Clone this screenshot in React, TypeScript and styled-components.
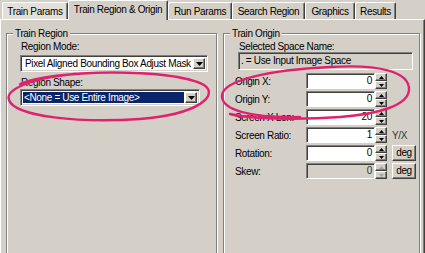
import React from "react";
import styled, { createGlobalStyle } from "styled-components";

const GlobalStyle = createGlobalStyle`
  html, body { margin: 0; padding: 0; background: #d4d0c8; }
  body {
    font-family: "Liberation Sans", Arial, sans-serif;
    font-size: 10px;
    letter-spacing: -0.35px;
    color: #000;
  }
  * { box-sizing: border-box; }
`;

const Root = styled.div`
  position: relative;
  width: 425px;
  height: 253px;
  overflow: hidden;
  background: #d4d0c8;
`;

const TabStrip = styled.div`
  display: flex;
  align-items: flex-end;
  height: 19px;
  padding-left: 2px;
  position: relative;
  z-index: 1;
`;

const Tab = styled.div<{ $active?: boolean; $width: number; $hot?: boolean }>`
  width: ${(p) => p.$width}px;
  height: ${(p) => (p.$active ? 20 : 17)}px;
  margin-bottom: ${(p) => (p.$active ? -1 : 0)}px;
  background: ${(p) => (p.$hot ? "#e3e0d9" : "#d4d0c8")};
  border-top: 1px solid #fff;
  border-left: 1px solid #fff;
  border-right: 1px solid #404040;
  box-shadow: inset -1px 0 0 #808080;
  border-radius: 2px 2px 0 0;
  display: flex;
  align-items: center;
  justify-content: center;
  line-height: 13px;
  white-space: nowrap;
  padding-bottom: ${(p) => (p.$active ? 2 : 0)}px;
`;

const Panel = styled.div`
  width: 425px;
  height: 250px;
  border-top: 1px solid #fff;
  border-left: 1px solid #fff;
  border-right: 1px solid #404040;
  box-shadow: inset -1px 0 0 #808080;
  display: flex;
  align-items: flex-start;
  gap: 6px;
  padding: 7px 0 0 5px;
`;

const Group = styled.fieldset<{ $width: number }>`
  width: ${(p) => p.$width}px;
  height: 260px;
  margin: 0;
  padding: 0;
  min-width: 0;
  border: 1px solid #808080;
  box-shadow: inset 1px 1px 0 #fff, 1px 1px 0 #fff;
`;

const Legend = styled.legend`
  margin-left: 6px;
  padding: 0 2px;
  line-height: 13px;
  background: #d4d0c8;
`;

const GroupBody = styled.div<{ $pl: number }>`
  display: flex;
  flex-direction: column;
  align-items: flex-start;
  padding-left: ${(p) => p.$pl}px;
`;

const Label = styled.div<{ $mt?: number; $ml?: number }>`
  line-height: 13px;
  margin-top: ${(p) => p.$mt ?? 0}px;
  margin-left: ${(p) => p.$ml ?? 0}px;
  white-space: nowrap;
`;

const Combo = styled.div<{ $width: number; $mt?: number }>`
  width: ${(p) => p.$width}px;
  height: 17px;
  margin-top: ${(p) => p.$mt ?? 0}px;
  border: 1px solid;
  border-color: #808080 #fff #fff #808080;
  box-shadow: inset 1px 1px 0 #404040, inset -1px -1px 0 #d4d0c8;
  background: #fff;
  display: flex;
  align-items: stretch;
  padding: 2px;
`;

const ComboText = styled.div<{ $selected?: boolean }>`
  flex: 1;
  line-height: 11px;
  padding-left: ${(p) => (p.$selected ? 1 : 2)}px;
  margin-right: 1px;
  white-space: nowrap;
  overflow: hidden;
  background: ${(p) => (p.$selected ? "#0a246a" : "transparent")};
  color: ${(p) => (p.$selected ? "#fff" : "#000")};
`;

const DropButton = styled.div`
  width: 12px;
  background: #d4d0c8;
  border: 1px solid;
  border-color: #fff #404040 #404040 #fff;
  box-shadow: inset -1px -1px 0 #808080;
  display: flex;
  align-items: center;
  justify-content: center;
`;

const ReadOnlyBox = styled.div`
  width: 175px;
  height: 18px;
  margin-top: -1px;
  margin-left: 3px;
  border: 1px solid;
  border-color: #808080 #fff #fff #808080;
  box-shadow: inset 1px 1px 0 #404040;
  background: #d4d0c8;
  line-height: 15px;
  padding-left: 2px;
  white-space: nowrap;
  overflow: hidden;
`;

const Rows = styled.div`
  display: flex;
  flex-direction: column;
  gap: 2px;
  margin-top: 3px;
`;

const Row = styled.div`
  display: flex;
  align-items: center;
  height: 16px;
`;

const RowLabel = styled.div`
  width: 71px;
  line-height: 13px;
  white-space: nowrap;
`;

const Edit = styled.div<{ $disabled?: boolean }>`
  width: 69px;
  height: 16px;
  border: 1px solid;
  border-color: #808080 #fff #fff #808080;
  box-shadow: inset 1px 1px 0 #404040;
  background: ${(p) => (p.$disabled ? "#d4d0c8" : "#fff")};
  color: ${(p) => (p.$disabled ? "#333" : "#000")};
  text-align: right;
  padding-right: 2px;
  line-height: 14px;
`;

const Spin = styled.div`
  display: flex;
  flex-direction: column;
  width: 12px;
  height: 16px;
`;

const SpinBtn = styled.div`
  flex: 1;
  background: #d4d0c8;
  border: 1px solid;
  border-color: #fff #404040 #404040 #fff;
  box-shadow: inset -1px -1px 0 #808080;
  display: flex;
  align-items: center;
  justify-content: center;
`;

const Extra = styled.div`
  margin-left: 5px;
  line-height: 13px;
  color: #333;
`;

const Button = styled.div`
  margin-left: 5px;
  width: 24px;
  height: 16px;
  background: #d4d0c8;
  border: 1px solid;
  border-color: #fff #404040 #404040 #fff;
  box-shadow: inset -1px -1px 0 #808080;
  display: flex;
  align-items: center;
  justify-content: center;
  line-height: 12px;
`;

const Overlay = styled.svg`
  position: absolute;
  left: 0;
  top: 0;
  width: 425px;
  height: 253px;
  pointer-events: none;
  z-index: 5;
`;

const Arrow = ({ up, color = "#000" }: { up?: boolean; color?: string }) => (
  <svg width="5" height="3" viewBox="0 0 5 3" style={{ display: "block" }}>
    <path d={up ? "M2.5 0 L5 3 L0 3 Z" : "M0 0 L5 0 L2.5 3 Z"} fill={color} />
  </svg>
);

const DropArrow = () => (
  <svg width="7" height="4" viewBox="0 0 7 4" style={{ display: "block" }}>
    <path d="M0 0 L7 0 L3.5 4 Z" fill="#000" />
  </svg>
);

const tabs = [
  { label: "Train Params", width: 66, hot: true },
  { label: "Train Region & Origin", width: 100, active: true },
  { label: "Run Params", width: 64 },
  { label: "Search Region", width: 73 },
  { label: "Graphics", width: 50 },
  { label: "Results", width: 41 },
];

type Field = {
  label: string;
  value: string;
  disabled?: boolean;
  extra?: "text" | "button";
  extraText?: string;
};

const fields: Field[] = [
  { label: "Origin X:", value: "0" },
  { label: "Origin Y:", value: "0" },
  { label: "Screen X Len:", value: "20" },
  { label: "Screen Ratio:", value: "1", extra: "text", extraText: "Y/X" },
  { label: "Rotation:", value: "0", extra: "button", extraText: "deg" },
  { label: "Skew:", value: "0", disabled: true, extra: "button", extraText: "deg" },
];

export default function App() {
  return (
    <Root>
      <GlobalStyle />
      <TabStrip>
        {tabs.map((t) => (
          <Tab key={t.label} $width={t.width} $active={t.active} $hot={t.hot}>
            {t.label}
          </Tab>
        ))}
      </TabStrip>
      <Panel>
        <Group $width={211}>
          <Legend>Train Region</Legend>
          <GroupBody $pl={13}>
            <Label $ml={1}>Region Mode:</Label>
            <Combo $width={188} $mt={2}>
              <ComboText>Pixel Aligned Bounding Box Adjust Mask</ComboText>
              <DropButton>
                <DropArrow />
              </DropButton>
            </Combo>
            <Label $ml={1} $mt={4}>Region Shape:</Label>
            <Combo $width={180}>
              <ComboText $selected>&lt;None = Use Entire Image&gt;</ComboText>
              <DropButton>
                <DropArrow />
              </DropButton>
            </Combo>
          </GroupBody>
        </Group>
        <Group $width={197}>
          <Legend>Train Origin</Legend>
          <GroupBody $pl={11}>
            <Label $ml={4}>Selected Space Name:</Label>
            <ReadOnlyBox>. = Use Input Image Space</ReadOnlyBox>
            <Rows>
              {fields.map((f) => (
                <Row key={f.label}>
                  <RowLabel>{f.label}</RowLabel>
                  <Edit $disabled={f.disabled}>{f.value}</Edit>
                  <Spin>
                    <SpinBtn>
                      <Arrow up color={f.disabled ? "#a0a0a0" : "#000"} />
                    </SpinBtn>
                    <SpinBtn>
                      <Arrow color={f.disabled ? "#a0a0a0" : "#000"} />
                    </SpinBtn>
                  </Spin>
                  {f.extra === "text" && <Extra>{f.extraText}</Extra>}
                  {f.extra === "button" && <Button>{f.extraText}</Button>}
                </Row>
              ))}
            </Rows>
          </GroupBody>
        </Group>
      </Panel>
      <Overlay viewBox="0 0 425 253">
        <path
          d="M20 84 C50 70, 170 67, 204 85 C219 95, 200 114, 140 119 C80 123, 15 117, 9 100 C5 90, 30 78, 75 74"
          fill="none"
          stroke="#e0226e"
          strokeWidth="2.4"
          strokeLinecap="round"
        />
        <path
          d="M300 117 C250 118, 222 110, 222 96 C222 80, 270 70, 330 67 C380 64, 410 72, 409 90 C408 105, 380 114, 340 117 C300 120, 250 119, 230 114"
          fill="none"
          stroke="#e0226e"
          strokeWidth="2.4"
          strokeLinecap="round"
        />
      </Overlay>
    </Root>
  );
}
